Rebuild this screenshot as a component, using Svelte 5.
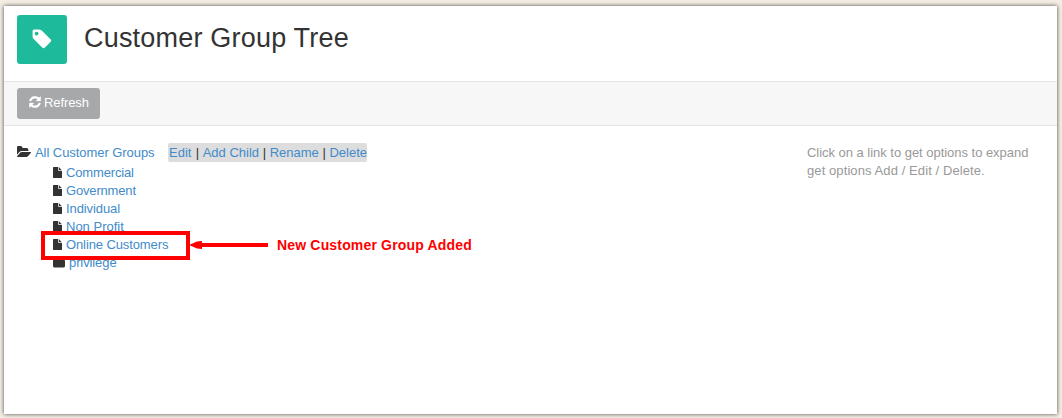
<script>
  const groups = [
    { name: 'Commercial', spacing: -0.15 },
    { name: 'Government', spacing: -0.17 },
    { name: 'Individual', spacing: -0.1 },
    { name: 'Non Profit', spacing: 0 },
    { name: 'Online Customers', spacing: -0.11 }
  ];
  const actions = ['Edit', 'Add Child', 'Rename', 'Delete'];
</script>

<main class="panel">
  <header>
    <div class="badge">
      <svg width="22" height="22" viewBox="0 0 1792 1792"><path fill="#fff" d="M1643 1024q0 53-37 90l-491 492q-39 37-91 37-53 0-90-37l-715-716q-38-37-64.5-101t-26.5-117v-416q0-52 38-90t90-38h416q53 0 117 26.5t102 64.5l715 714q37 39 37 91z" /><circle cx="455" cy="455" r="150" fill="#1dbb9b" /></svg>
    </div>
    <h1>Customer Group Tree</h1>
  </header>

  <div class="toolbar">
    <button>
      <svg width="12" height="12" viewBox="100 100 1592 1592"><path fill="#fff" stroke="#fff" stroke-width="45" d="M1639 1056q0 5-1 7-64 268-268 434.5t-478 166.5q-146 0-282.500-55t-243.500-157l-129 129q-19 19-45 19t-45-19-19-45v-448q0-26 19-45t45-19h448q26 0 45 19t19 45-19 45l-137 137q71 66 161 102t187 36q134 0 250-65t186-179q11-17 53-117 8-23 30-23h192q13 0 22.500 9.500t9.500 22.500zm25-800v448q0 26-19 45t-45 19h-448q-26 0-45-19t-19-45 19-45l138-138q-148-137-349-137-134 0-250 65t-186 179q-11 17-53 117-8 23-30 23h-199q-13 0-22.500-9.500t-9.500-22.500v-7q65-268 270-434.500t480-166.500q146 0 284 55.500t245 156.500l130-129q19-19 45-19t45 19 19 45z" /></svg>
      <span>Refresh</span>
    </button>
  </div>

  <div class="content">
    <section class="tree">
      <div class="root">
        <svg class="folder" width="14" height="12" viewBox="0 128 1815 1536" preserveAspectRatio="none"><path fill="#333" d="M1815 952q0 31-31 66l-336 396q-43 51-120.500 86.500t-143.500 35.500h-1088q-34 0-60.500-13t-26.500-43q0-31 31-66l336-396q43-51 120.500-86.500t143.500-35.500h1088q34 0 60.500 13t26.500 43zm-343-344v160h-832q-94 0-197 47.500t-164 119.500l-337 396-5 6q0-4-.500-12.500t-.500-12.500v-960q0-92 66-158t158-66h320q92 0 158 66t66 158v32h544q92 0 158 66t66 158z" /></svg>
        <a class="all" href="#all">All Customer Groups</a>
        <div class="actions">
          {#each actions as action, i}{#if i}<span>&nbsp;|&nbsp;</span>{/if}<a href="#{action}">{action}</a>{/each}
        </div>
      </div>
      <ul>
        {#each groups as group}
          <li>
            <svg width="9" height="11" viewBox="128 0 1536 1792" preserveAspectRatio="none"><path fill="#333" d="M1152 512v-472q22 14 36 28l408 408q14 14 28 36h-472zm-128 32q0 40 28 68t68 28h544v1056q0 40-28 68t-68 28h-1344q-40 0-68-28t-28-68v-1600q0-40 28-68t68-28h800v544z" /></svg>
            <a href="#{group.name}" style="letter-spacing: {group.spacing}px">{group.name}</a>
          </li>
        {/each}
        <li>
          <svg width="12" height="11" viewBox="0 0 12 11"><path fill="#333" d="M1.500 1h3Q6 1 6 2.500h4.500Q12 2.500 12 4v5q0 1.500-1.500 1.500h-9Q0 10.500 0 9V2.500Q0 1 1.500 1Z" /></svg>
          <a href="#privilege" class="last">privilege</a>
        </li>
      </ul>
    </section>
    <p class="help"><span>Click on a link to get options to expand</span><br /><span class="second">get options Add / Edit / Delete.</span></p>
  </div>

  <div class="highlight"></div>
  <svg class="arrow" width="80" height="10" viewBox="0 0 80 10"><path fill="red" d="M0 5 8 1.500 13 1v2h66v4H13v2L8 8.500Z" /></svg>
  <strong class="note">New Customer Group Added</strong>
</main>

<style>
  :global(body) {
    margin: 0;
    background: #f3ede3;
    overflow: hidden;
  }
  .panel {
    position: relative;
    box-sizing: border-box;
    width: 1053px;
    height: 408px;
    margin: 6px 0 4px 4px;
    background: #fff;
    box-shadow: 0 0 4px #444;
    color: #333;
    font: 13px/18px "Liberation Sans", Arial, sans-serif;
  }
  svg { display: block; flex: none; }
  header {
    display: flex;
    box-sizing: border-box;
    height: 75px;
    padding: 9px 13px;
    gap: 17px;
  }
  .badge {
    display: flex;
    box-sizing: border-box;
    width: 50px;
    height: 49px;
    padding-bottom: 2px;
    align-items: center;
    justify-content: center;
    border-radius: 3px;
    background: #1dbb9b;
  }
  h1 {
    margin: 7px 0 0;
    font-size: 27px;
    line-height: 32px;
    font-weight: 400;
    letter-spacing: 0.2px;
  }
  .toolbar {
    box-sizing: border-box;
    height: 45px;
    padding: 6px 13px;
    border: solid #e5e5e5;
    border-width: 1px 0;
    background: #f7f7f7;
  }
  button {
    display: flex;
    box-sizing: border-box;
    width: 83px;
    height: 31px;
    padding: 0 0 1px 12px;
    align-items: center;
    gap: 3px;
    border: 0;
    border-radius: 3px;
    background: #a7a8aa;
    color: #fff;
    font: inherit;
    letter-spacing: -0.1px;
  }
  button svg { margin-bottom: 2px; }
  .content {
    display: flex;
    justify-content: space-between;
    padding: 18px 29px 0 13px;
  }
  a { color: #428bca; text-decoration: none; }
  .root { display: flex; height: 20px; align-items: flex-start; }
  .folder { margin: 2px 4px 0 0; }
  .all { width: 120px; letter-spacing: -0.06px; white-space: nowrap; }
  .actions {
    display: flex;
    box-sizing: border-box;
    width: 199px;
    height: 19px;
    margin: -1px 0 0 13px;
    padding: 1px 0 0 1px;
    border-radius: 2px;
    background: #ddd;
    white-space: nowrap;
  }
  .actions a:first-child { margin-right: 0.7px; }
  ul { margin: 0; padding: 0 0 0 36px; list-style: none; }
  li { display: flex; height: 18px; align-items: center; gap: 4px; }
  li svg { margin-bottom: 2px; }
  .last { letter-spacing: -0.1px; }
  .help { width: 221px; margin: 0; color: #999; white-space: nowrap; letter-spacing: -0.03px; }
  .second { letter-spacing: 0.09px; }
  .highlight {
    position: absolute;
    left: 37px;
    top: 225px;
    box-sizing: border-box;
    width: 149px;
    height: 29px;
    border: 4px solid red;
  }
  .arrow { position: absolute; left: 185px; top: 234px; }
  .note {
    position: absolute;
    left: 273px;
    top: 230px;
    color: red;
    font-size: 14px;
    letter-spacing: 0.17px;
    white-space: nowrap;
  }
</style>
